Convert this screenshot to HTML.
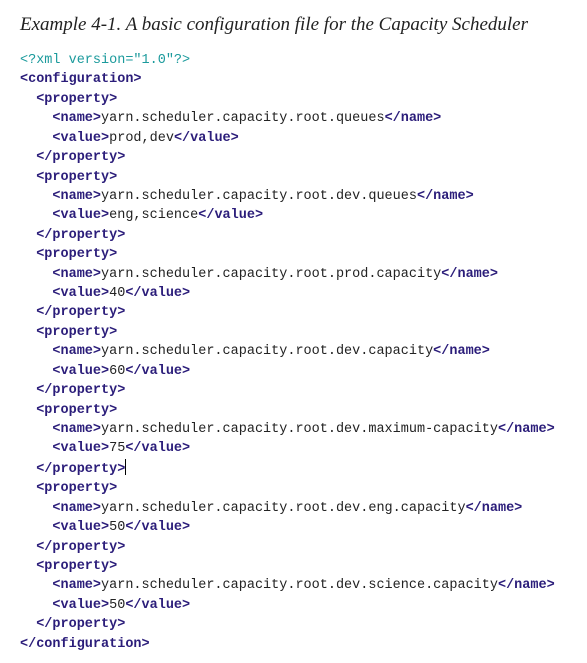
<!DOCTYPE html>
<html><head><meta charset="utf-8"><style>
body{margin:0;background:#fff;width:587px;height:663px;overflow:hidden}
.t{position:absolute;left:20px;top:14px;font:italic 19px "Liberation Serif",serif;color:#222;white-space:nowrap}
pre{position:absolute;left:20px;top:51px;margin:0;font:13.5px/19.42px "Liberation Mono",monospace;color:#222}
.d{color:#1b9a9c}
b{color:#2b1d7a;font-weight:bold}
.c{display:inline-block;width:1px;height:16px;background:#000;vertical-align:-3px}
</style></head><body>
<div class="t">Example 4-1. A basic configuration file for the Capacity Scheduler</div>
<pre><span class="d">&lt;?xml version="1.0"?&gt;</span>
<b>&lt;configuration&gt;</b>
  <b>&lt;property&gt;</b>
    <b>&lt;name&gt;</b>yarn.scheduler.capacity.root.queues<b>&lt;/name&gt;</b>
    <b>&lt;value&gt;</b>prod,dev<b>&lt;/value&gt;</b>
  <b>&lt;/property&gt;</b>
  <b>&lt;property&gt;</b>
    <b>&lt;name&gt;</b>yarn.scheduler.capacity.root.dev.queues<b>&lt;/name&gt;</b>
    <b>&lt;value&gt;</b>eng,science<b>&lt;/value&gt;</b>
  <b>&lt;/property&gt;</b>
  <b>&lt;property&gt;</b>
    <b>&lt;name&gt;</b>yarn.scheduler.capacity.root.prod.capacity<b>&lt;/name&gt;</b>
    <b>&lt;value&gt;</b>40<b>&lt;/value&gt;</b>
  <b>&lt;/property&gt;</b>
  <b>&lt;property&gt;</b>
    <b>&lt;name&gt;</b>yarn.scheduler.capacity.root.dev.capacity<b>&lt;/name&gt;</b>
    <b>&lt;value&gt;</b>60<b>&lt;/value&gt;</b>
  <b>&lt;/property&gt;</b>
  <b>&lt;property&gt;</b>
    <b>&lt;name&gt;</b>yarn.scheduler.capacity.root.dev.maximum-capacity<b>&lt;/name&gt;</b>
    <b>&lt;value&gt;</b>75<b>&lt;/value&gt;</b>
  <b>&lt;/property&gt;</b><span class="c"></span>
  <b>&lt;property&gt;</b>
    <b>&lt;name&gt;</b>yarn.scheduler.capacity.root.dev.eng.capacity<b>&lt;/name&gt;</b>
    <b>&lt;value&gt;</b>50<b>&lt;/value&gt;</b>
  <b>&lt;/property&gt;</b>
  <b>&lt;property&gt;</b>
    <b>&lt;name&gt;</b>yarn.scheduler.capacity.root.dev.science.capacity<b>&lt;/name&gt;</b>
    <b>&lt;value&gt;</b>50<b>&lt;/value&gt;</b>
  <b>&lt;/property&gt;</b>
<b>&lt;/configuration&gt;</b></pre>
</body></html>
